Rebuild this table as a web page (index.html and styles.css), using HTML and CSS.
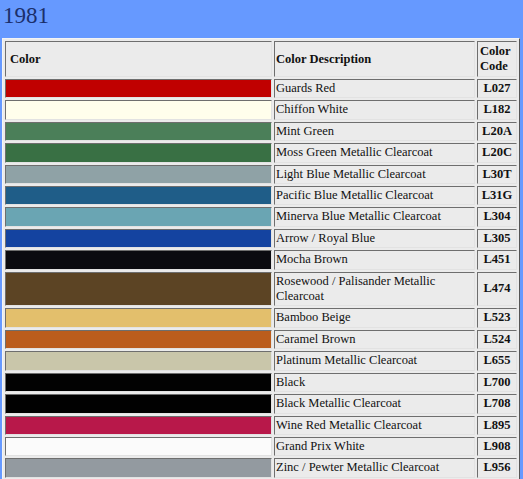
FILE: index.html
```html
<!DOCTYPE html>
<html>
<head>
<meta charset="utf-8">
<link rel="stylesheet" href="styles.css">
</head>
<body>
<h1 class="year">1981</h1>
<table class="paint">
<colgroup><col class="c1"><col class="c2"><col class="c3"></colgroup>
<tr class="head"><th>Color</th><th class="h2">Color Description</th><th class="h3">Color Code</th></tr>
<tr><td class="sw" style="background:#c00000"></td><td>Guards Red</td><td class="code">L027</td></tr>
<tr><td class="sw" style="background:#fffeec"></td><td>Chiffon White</td><td class="code">L182</td></tr>
<tr><td class="sw" style="background:#4b7f59"></td><td>Mint Green</td><td class="code">L20A</td></tr>
<tr><td class="sw" style="background:#397044"></td><td>Moss Green Metallic Clearcoat</td><td class="code">L20C</td></tr>
<tr><td class="sw" style="background:#8fa2a6"></td><td>Light Blue Metallic Clearcoat</td><td class="code">L30T</td></tr>
<tr><td class="sw" style="background:#1f5d88"></td><td>Pacific Blue Metallic Clearcoat</td><td class="code">L31G</td></tr>
<tr><td class="sw" style="background:#6aa5b3"></td><td>Minerva Blue Metallic Clearcoat</td><td class="code">L304</td></tr>
<tr><td class="sw" style="background:#1443a0"></td><td>Arrow / Royal Blue</td><td class="code">L305</td></tr>
<tr><td class="sw" style="background:#0b0b10"></td><td>Mocha Brown</td><td class="code">L451</td></tr>
<tr><td class="sw" style="background:#5c4424"></td><td>Rosewood / Palisander Metallic Clearcoat</td><td class="code">L474</td></tr>
<tr><td class="sw" style="background:#e3bf6c"></td><td>Bamboo Beige</td><td class="code">L523</td></tr>
<tr><td class="sw" style="background:#bb5d1d"></td><td>Caramel Brown</td><td class="code">L524</td></tr>
<tr><td class="sw" style="background:#c9c6aa"></td><td>Platinum Metallic Clearcoat</td><td class="code">L655</td></tr>
<tr><td class="sw" style="background:#020202"></td><td>Black</td><td class="code">L700</td></tr>
<tr><td class="sw" style="background:#010101"></td><td>Black Metallic Clearcoat</td><td class="code">L708</td></tr>
<tr><td class="sw" style="background:#b8184a"></td><td>Wine Red Metallic Clearcoat</td><td class="code">L895</td></tr>
<tr><td class="sw" style="background:#fbfbfb"></td><td>Grand Prix White</td><td class="code">L908</td></tr>
<tr><td class="sw" style="background:#939aa0"></td><td>Zinc / Pewter Metallic Clearcoat</td><td class="code">L956</td></tr>
</table>
</body>
</html>
```
FILE: styles.css
```css
html, body {
  margin: 0;
  padding: 0;
  background: #6699ff;
}
body {
  font-family: "Liberation Serif", "Times New Roman", serif;
  color: #111;
}
.year {
  margin: 0;
  padding: 3px 0 0 3px;
  height: 38px;
  box-sizing: border-box;
  font-size: 23px;
  font-weight: normal;
  line-height: 26px;
  color: #1b2f6b;
}
.paint {
  margin-left: 2px;
  width: 518px;
  border-collapse: separate;
  border-spacing: 2px;
  border: 1px solid;
  border-color: #f4f4f4 #555 #555 #f4f4f4;
  background: #ebebeb;
  font-size: 12.5px;
  table-layout: fixed;
}
.c1 { width: 267px; }
.c2 { width: 201px; }
.c3 { width: 40px; }
.paint th, .paint td {
  box-sizing: border-box;
  border: 1px solid;
  border-color: #6e6e6e #e2e2e2 #e2e2e2 #6e6e6e;
  padding: 1px 1px;
  line-height: 15.4px;
  text-align: left;
  vertical-align: middle;
}
.paint th {
  font-weight: bold;
  line-height: 15px;
  padding: 2px 4px;
}
.paint th.h2 { padding-left: 1px; }
.paint th.h3 { padding: 2px 1px 2px 2px; }
.paint td.sw { padding: 0; }
.paint td.code {
  font-weight: bold;
  text-align: center;
}
```
